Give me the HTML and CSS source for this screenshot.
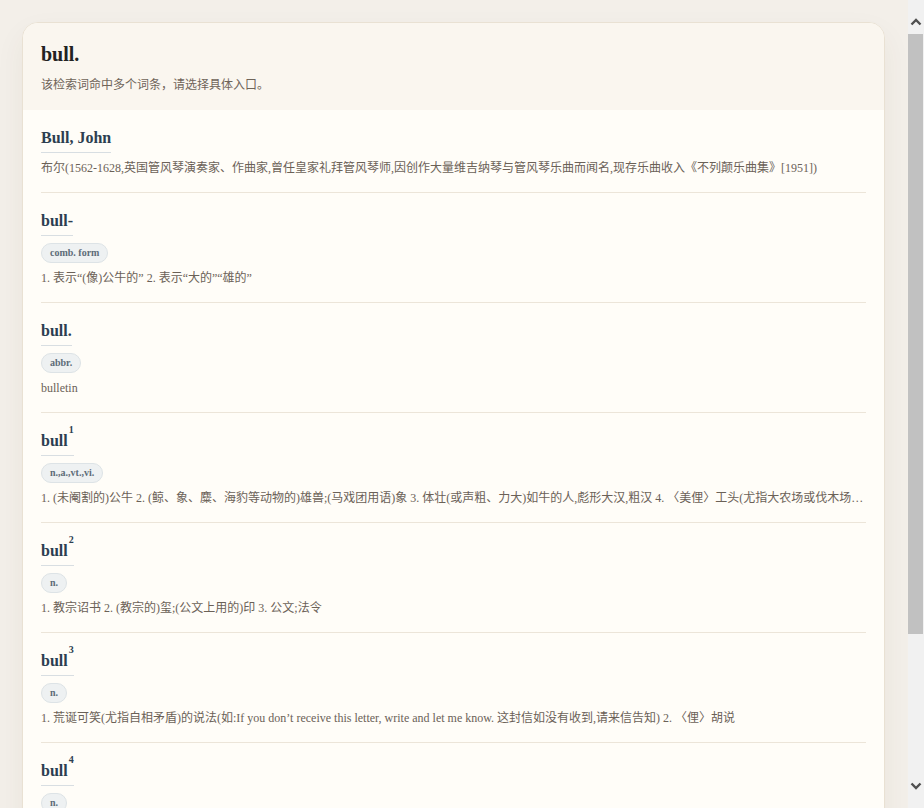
FILE: index.html
```html
<!DOCTYPE html>
<html lang="zh-CN">

<head>
    <meta charset="UTF-8">
    <meta name="viewport" content="width=device-width, initial-scale=1.0">
    <title>bull.</title>

    <link rel="stylesheet" href="styles.css">
</head>

<body>

    <div class="page">
        <div class="card">
            <div class="card-head">
                <h1>bull.</h1>
                <p class="hint">该检索词命中多个词条，请选择具体入口。</p>
            </div>

            <ul class="entries">
                <li class="entry">
                    <h3 class="headword">Bull, John</h3>
                    <p class="gloss">布尔(1562-1628,英国管风琴演奏家、作曲家,曾任皇家礼拜管风琴师,因创作大量维吉纳琴与管风琴乐曲而闻名,现存乐曲收入《不列颠乐曲集》[1951])</p>
                </li>
                <li class="entry">
                    <h3 class="headword">bull-</h3>
                    <div class="pos"><span>comb. form</span></div>
                    <p class="gloss">1. 表示“(像)公牛的” 2. 表示“大的”“雄的”</p>
                </li>
                <li class="entry">
                    <h3 class="headword">bull.</h3>
                    <div class="pos"><span>abbr.</span></div>
                    <p class="gloss">bulletin</p>
                </li>
                <li class="entry">
                    <h3 class="headword">bull<sup>1</sup></h3>
                    <div class="pos"><span>n.,a.,vt.,vi.</span></div>
                    <p class="gloss">1. (未阉割的)公牛 2. (鲸、象、麋、海豹等动物的)雄兽;(马戏团用语)象 3. 体壮(或声粗、力大)如牛的人,彪形大汉,粗汉 4. 〈美俚〉工头(尤指大农场或伐木场监工) 5. (证券交易所的)买方,多头</p>
                </li>
                <li class="entry">
                    <h3 class="headword">bull<sup>2</sup></h3>
                    <div class="pos"><span>n.</span></div>
                    <p class="gloss">1. 教宗诏书 2. (教宗的)玺;(公文上用的)印 3. 公文;法令</p>
                </li>
                <li class="entry">
                    <h3 class="headword">bull<sup>3</sup></h3>
                    <div class="pos"><span>n.</span></div>
                    <p class="gloss">1. 荒诞可笑(尤指自相矛盾)的说法(如:If you don’t receive this letter, write and let me know. 这封信如没有收到,请来信告知) 2. 〈俚〉胡说</p>
                </li>
                <li class="entry">
                    <h3 class="headword">bull<sup>4</sup></h3>
                    <div class="pos"><span>n.</span></div>
                    <p class="gloss">1. 〈俚〉废话;胡说八道;吹牛 2. 〈军俚〉繁琐的规矩;过分的整洁要求</p>
                </li>
                <li class="entry">
                    <h3 class="headword">bull<sup>5</sup></h3>
                    <div class="pos"><span>n.</span></div>
                    <p class="gloss">1. (用空酒桶加水制成的)淡酒</p>
                </li>
                <li class="entry">
                    <h3 class="headword">Bull Run</h3>
                    <p class="gloss">布尔河(美国弗吉尼亚州东北部河流,南北战争中两次战役发生于此)</p>
                </li>
            </ul>
        </div>
    </div>

    <!-- drawn scrollbar, the browser hides the real one -->
    <div class="scrollbar">
        <div class="arrow up">
            <svg width="16" height="16" viewBox="0 0 16 16"><polyline points="3.5,10.5 8,6 12.5,10.5" fill="none" stroke="#505050" stroke-width="2.4" /></svg>
        </div>
        <div class="track">
            <div class="thumb"></div>
        </div>
        <div class="arrow down">
            <svg width="16" height="16" viewBox="0 0 16 16"><polyline points="3.5,5.5 8,10 12.5,5.5" fill="none" stroke="#505050" stroke-width="2.4" /></svg>
        </div>
    </div>

</body>

</html>
```

FILE: styles.css
```css
html,
body,
div,
span,
h1,
h3,
p,
ul,
li,
sup {
    margin: 0;
    padding: 0;
    border: 0;
    font-size: 100%;
    font: inherit;
    vertical-align: baseline;
}

ul {
    list-style: none;
}

html,
body {
    height: 100%;
}

body {
    display: flex;
    background-color: #f3efe9;
    font-family: "Liberation Serif", "Noto Sans CJK SC", serif;
    line-height: 1;
    overflow: hidden;
}

.page {
    flex: 1;
    height: 100%;
    overflow-y: auto;
    padding: 22px 23px 22px 22px;
    box-sizing: border-box;
}

.card {
    background-color: #fffdf8;
    border: 1px solid #e9e1d3;
    border-radius: 16px;
    overflow: hidden;
    box-shadow: 0 12px 30px rgba(90, 60, 30, 0.06);
}

.card-head {
    background-color: #faf6ef;
    padding: 18px 18px 17px;
}

.card-head h1 {
    font-size: 20px;
    font-weight: bold;
    line-height: 26px;
    color: #222;
}

.hint {
    margin-top: 10px;
    font-size: 12px;
    line-height: 16px;
    color: #6f6459;
}

.entries {
    padding: 0 18px;
}

.entry {
    padding: 17px 0 15px;
    border-bottom: 1px solid #ece5d9;
}

.headword {
    display: inline-block;
    font-size: 16px;
    font-weight: bold;
    line-height: 22px;
    color: #2c3e50;
    padding-bottom: 3px;
    border-bottom: 1px solid #d8dee2;
}

.headword sup {
    font-size: 10px;
    line-height: 0;
    position: relative;
    top: -13px;
    margin-left: 1px;
}

.pos {
    display: flex;
    margin-top: 7px;
}

.pos span {
    height: 20px;
    line-height: 18px;
    padding: 0 8px;
    box-sizing: border-box;
    font-size: 10px;
    font-weight: bold;
    color: #5d6c78;
    background-color: #eef1f2;
    border: 1px solid #dde3e6;
    border-radius: 10px;
}

.gloss {
    margin-top: 6px;
    font-size: 12px;
    line-height: 18px;
    color: #6b6157;
    white-space: nowrap;
    overflow: hidden;
    text-overflow: ellipsis;
}

.scrollbar {
    width: 16px;
    flex-shrink: 0;
    display: flex;
    flex-direction: column;
    background-color: #f1f1f1;
}

.arrow {
    flex-shrink: 0;
    height: 34px;
    box-sizing: border-box;
}

.arrow svg {
    display: block;
}

.arrow.up {
    padding-top: 14px;
}

.arrow.down {
    padding-top: 4px;
}

.track {
    flex: 1;
    padding-right: 1px;
}

.thumb {
    height: 600px;
    background-color: #c1c1c1;
}
```
